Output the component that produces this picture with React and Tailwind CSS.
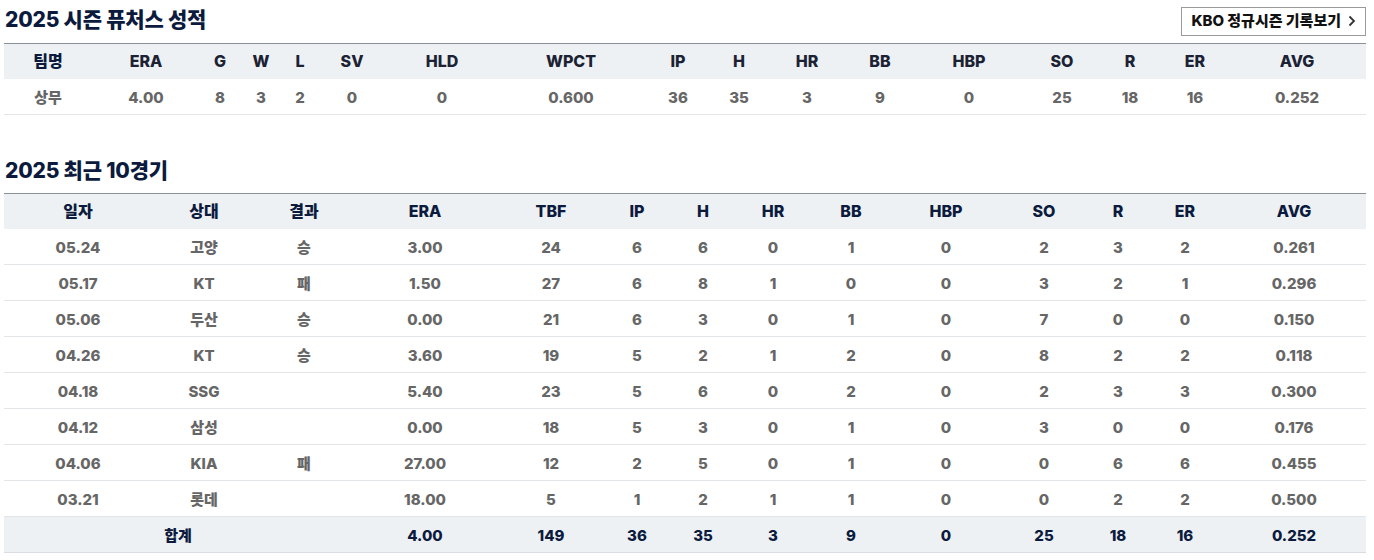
import React from 'react'

const font = { fontFamily: 'Inter, "Noto Sans CJK KR", "Noto Sans", sans-serif' }

const seasonCols = ['팀명', 'ERA', 'G', 'W', 'L', 'SV', 'HLD', 'WPCT', 'IP', 'H', 'HR', 'BB', 'HBP', 'SO', 'R', 'ER', 'AVG']
const seasonRow = ['상무', '4.00', '8', '3', '2', '0', '0', '0.600', '36', '35', '3', '9', '0', '25', '18', '16', '0.252']

const recentCols = ['일자', '상대', '결과', 'ERA', 'TBF', 'IP', 'H', 'HR', 'BB', 'HBP', 'SO', 'R', 'ER', 'AVG']
const recentRows = [
    ['05.24', '고양', '승', '3.00', '24', '6', '6', '0', '1', '0', '2', '3', '2', '0.261'],
    ['05.17', 'KT', '패', '1.50', '27', '6', '8', '1', '0', '0', '3', '2', '1', '0.296'],
    ['05.06', '두산', '승', '0.00', '21', '6', '3', '0', '1', '0', '7', '0', '0', '0.150'],
    ['04.26', 'KT', '승', '3.60', '19', '5', '2', '1', '2', '0', '8', '2', '2', '0.118'],
    ['04.18', 'SSG', '', '5.40', '23', '5', '6', '0', '2', '0', '2', '3', '3', '0.300'],
    ['04.12', '삼성', '', '0.00', '18', '5', '3', '0', '1', '0', '3', '0', '0', '0.176'],
    ['04.06', 'KIA', '패', '27.00', '12', '2', '5', '0', '1', '0', '0', '6', '6', '0.455'],
    ['03.21', '롯데', '', '18.00', '5', '1', '2', '1', '1', '0', '0', '2', '2', '0.500'],
]
const totalRow = ['4.00', '149', '36', '35', '3', '9', '0', '25', '18', '16', '0.252']

const seasonGrid = 'grid grid-cols-[88px_108px_40px_42px_36px_68px_112px_146px_68px_54px_82px_64px_114px_72px_64px_66px_138px]'
const recentGrid = 'grid grid-cols-[148px_104px_96px_146px_106px_66px_66px_74px_82px_108px_88px_60px_74px_144px]'

const App = () => {
    return (
        <div className="bg-white w-[1374px] h-[560px] px-[4px] overflow-hidden" style={font}>
            {/* 시즌 성적 */}
            <div className="flex items-center justify-between h-[43px] pb-[3px]">
                <h2 className="text-[21px] font-extrabold text-[#0b1a3d] pl-[1px] tracking-[-0.2px]">2025 시즌 퓨처스 성적</h2>
                <button className="flex items-center gap-[7px] h-[29px] px-[9px] border border-[#9a9a9a] text-[15px] font-extrabold text-[#111] mr-[4px] mt-[2px]">
                    KBO 정규시즌 기록보기
                    <svg width="8" height="12" viewBox="0 0 8 12" fill="none">
                        <path d="M1.5 1.5 L6 6 L1.5 10.5" stroke="#333" strokeWidth="1.8" />
                    </svg>
                </button>
            </div>
            <div className="w-[1362px]">
                <div className={`${seasonGrid} h-[36px] items-center pb-[2px] bg-[#edf1f3] border-t border-[#8a9098] text-[16px] font-extrabold text-[#1c2233]`}>
                    {seasonCols.map((c, i) => (
                        <div key={i} className={`text-center ${i === 0 ? 'text-[#0b1a3d]' : ''}`}>{c}</div>
                    ))}
                </div>
                <div className={`${seasonGrid} h-[36px] items-center pt-[3px] border-b border-[#e3e6e9] text-[15px] font-extrabold text-[#666]`}>
                    {seasonRow.map((c, i) => (
                        <div key={i} className="text-center">{c}</div>
                    ))}
                </div>
            </div>

            {/* 최근 10경기 */}
            <div className="flex items-center h-[78px] pt-[34px]">
                <h2 className="text-[21px] font-extrabold text-[#0b1a3d] pl-[1px] tracking-[-0.2px]">2025 최근 10경기</h2>
            </div>
            <div className="w-[1362px]">
                <div className={`${recentGrid} h-[36px] items-center pb-[2px] bg-[#edf1f3] border-t border-[#8a9098] text-[16px] font-extrabold text-[#0b1a3d]`}>
                    {recentCols.map((c, i) => (
                        <div key={i} className="text-center">{c}</div>
                    ))}
                </div>
                {recentRows.map((row, r) => (
                    <div key={r} className={`${recentGrid} h-[36px] items-center pt-[3px] border-b border-[#e3e6e9] text-[15px] font-extrabold text-[#666]`}>
                        {row.map((c, i) => (
                            <div key={i} className="text-center">{c}</div>
                        ))}
                    </div>
                ))}
                <div className={`${recentGrid} h-[36px] items-center pt-[3px] bg-[#edf1f3] border-b border-[#d9dde1] text-[15px] font-extrabold text-[#0b1a3d]`}>
                    <div className="col-span-3 text-center">합계</div>
                    {totalRow.map((c, i) => (
                        <div key={i} className="text-center">{c}</div>
                    ))}
                </div>
            </div>
        </div>
    )
}

export default App
